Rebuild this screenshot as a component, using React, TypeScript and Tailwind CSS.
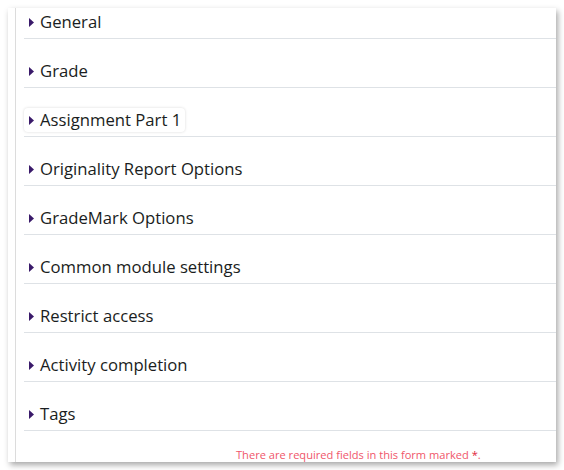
import React from "react";

const sections = [
  "General",
  "Grade",
  "Assignment Part 1",
  "Originality Report Options",
  "GradeMark Options",
  "Common module settings",
  "Restrict access",
  "Activity completion",
  "Tags",
];

function Caret() {
  return (
    <svg width="5" height="9" viewBox="0 0 5 9" className="shrink-0">
      <path d="M0 0 L5 4.5 L0 9 Z" fill="#3a1a6a" />
    </svg>
  );
}

export default function App() {
  return (
    <div className="w-[564px] h-[470px] bg-white pt-2 pl-2" style={{ fontFamily: '"Open Sans", sans-serif' }}>
      <div className="w-[548px] h-[454px] bg-white overflow-hidden shadow-[2px_3px_6px_rgba(0,0,0,0.35)] pl-[7px]">
        <div className="h-full flex flex-col border-l border-[#dcdcdc] pl-[8px]">
          <div className="-mt-[18px]">
            {sections.map((s, i) => (
              <div key={s} className="border-b border-[#dee2e6] pt-[20px] pb-[4px]">
                <div
                  className={
                    "flex w-fit items-center h-6 gap-[6px] pl-[5px] pr-1 text-[16.7px] text-[#1a1d21] leading-6 " +
                    (i === 2 ? "shadow-[0_0_3px_rgba(0,0,0,0.15)] rounded-sm" : "")
                  }
                >
                  <Caret />
                  <span>{s}</span>
                </div>
              </div>
            ))}
          </div>
          <div className="pl-[212px] pt-[16px] text-[11.1px] leading-4 text-[#f0566a]">
            There are required fields in this form marked <span className="text-[#e0263c]">*</span>.
          </div>
        </div>
      </div>
    </div>
  );
}
